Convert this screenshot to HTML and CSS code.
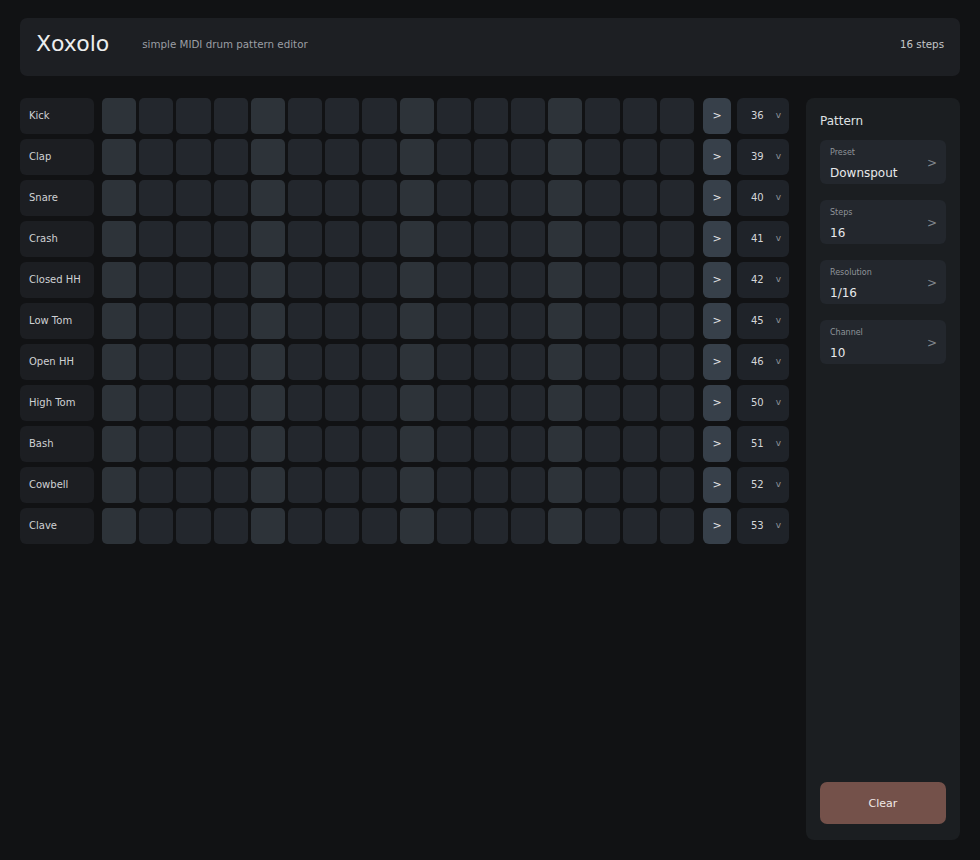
FILE: index.html
```html
<!DOCTYPE html>
<html>
<head>
<meta charset="utf-8">
<title>Xoxolo</title>
<link rel="stylesheet" href="styles.css">
</head>
<body>
<header class="topbar">
  <h1 class="title">Xoxolo</h1>
  <span class="subtitle">simple MIDI drum pattern editor</span>
  <span class="steps-info">16 steps</span>
</header>
<main class="main">
  <section class="grid">
    <div class="row"><div class="label">Kick</div><div class="cells"><i class="c a"></i><i class="c"></i><i class="c"></i><i class="c"></i><i class="c a"></i><i class="c"></i><i class="c"></i><i class="c"></i><i class="c a"></i><i class="c"></i><i class="c"></i><i class="c"></i><i class="c a"></i><i class="c"></i><i class="c"></i><i class="c"></i></div><button class="play">&gt;</button><div class="note"><span>36</span><span class="v">v</span></div></div>
    <div class="row"><div class="label">Clap</div><div class="cells"><i class="c a"></i><i class="c"></i><i class="c"></i><i class="c"></i><i class="c a"></i><i class="c"></i><i class="c"></i><i class="c"></i><i class="c a"></i><i class="c"></i><i class="c"></i><i class="c"></i><i class="c a"></i><i class="c"></i><i class="c"></i><i class="c"></i></div><button class="play">&gt;</button><div class="note"><span>39</span><span class="v">v</span></div></div>
    <div class="row"><div class="label">Snare</div><div class="cells"><i class="c a"></i><i class="c"></i><i class="c"></i><i class="c"></i><i class="c a"></i><i class="c"></i><i class="c"></i><i class="c"></i><i class="c a"></i><i class="c"></i><i class="c"></i><i class="c"></i><i class="c a"></i><i class="c"></i><i class="c"></i><i class="c"></i></div><button class="play">&gt;</button><div class="note"><span>40</span><span class="v">v</span></div></div>
    <div class="row"><div class="label">Crash</div><div class="cells"><i class="c a"></i><i class="c"></i><i class="c"></i><i class="c"></i><i class="c a"></i><i class="c"></i><i class="c"></i><i class="c"></i><i class="c a"></i><i class="c"></i><i class="c"></i><i class="c"></i><i class="c a"></i><i class="c"></i><i class="c"></i><i class="c"></i></div><button class="play">&gt;</button><div class="note"><span>41</span><span class="v">v</span></div></div>
    <div class="row"><div class="label">Closed HH</div><div class="cells"><i class="c a"></i><i class="c"></i><i class="c"></i><i class="c"></i><i class="c a"></i><i class="c"></i><i class="c"></i><i class="c"></i><i class="c a"></i><i class="c"></i><i class="c"></i><i class="c"></i><i class="c a"></i><i class="c"></i><i class="c"></i><i class="c"></i></div><button class="play">&gt;</button><div class="note"><span>42</span><span class="v">v</span></div></div>
    <div class="row"><div class="label">Low Tom</div><div class="cells"><i class="c a"></i><i class="c"></i><i class="c"></i><i class="c"></i><i class="c a"></i><i class="c"></i><i class="c"></i><i class="c"></i><i class="c a"></i><i class="c"></i><i class="c"></i><i class="c"></i><i class="c a"></i><i class="c"></i><i class="c"></i><i class="c"></i></div><button class="play">&gt;</button><div class="note"><span>45</span><span class="v">v</span></div></div>
    <div class="row"><div class="label">Open HH</div><div class="cells"><i class="c a"></i><i class="c"></i><i class="c"></i><i class="c"></i><i class="c a"></i><i class="c"></i><i class="c"></i><i class="c"></i><i class="c a"></i><i class="c"></i><i class="c"></i><i class="c"></i><i class="c a"></i><i class="c"></i><i class="c"></i><i class="c"></i></div><button class="play">&gt;</button><div class="note"><span>46</span><span class="v">v</span></div></div>
    <div class="row"><div class="label">High Tom</div><div class="cells"><i class="c a"></i><i class="c"></i><i class="c"></i><i class="c"></i><i class="c a"></i><i class="c"></i><i class="c"></i><i class="c"></i><i class="c a"></i><i class="c"></i><i class="c"></i><i class="c"></i><i class="c a"></i><i class="c"></i><i class="c"></i><i class="c"></i></div><button class="play">&gt;</button><div class="note"><span>50</span><span class="v">v</span></div></div>
    <div class="row"><div class="label">Bash</div><div class="cells"><i class="c a"></i><i class="c"></i><i class="c"></i><i class="c"></i><i class="c a"></i><i class="c"></i><i class="c"></i><i class="c"></i><i class="c a"></i><i class="c"></i><i class="c"></i><i class="c"></i><i class="c a"></i><i class="c"></i><i class="c"></i><i class="c"></i></div><button class="play">&gt;</button><div class="note"><span>51</span><span class="v">v</span></div></div>
    <div class="row"><div class="label">Cowbell</div><div class="cells"><i class="c a"></i><i class="c"></i><i class="c"></i><i class="c"></i><i class="c a"></i><i class="c"></i><i class="c"></i><i class="c"></i><i class="c a"></i><i class="c"></i><i class="c"></i><i class="c"></i><i class="c a"></i><i class="c"></i><i class="c"></i><i class="c"></i></div><button class="play">&gt;</button><div class="note"><span>52</span><span class="v">v</span></div></div>
    <div class="row"><div class="label">Clave</div><div class="cells"><i class="c a"></i><i class="c"></i><i class="c"></i><i class="c"></i><i class="c a"></i><i class="c"></i><i class="c"></i><i class="c"></i><i class="c a"></i><i class="c"></i><i class="c"></i><i class="c"></i><i class="c a"></i><i class="c"></i><i class="c"></i><i class="c"></i></div><button class="play">&gt;</button><div class="note"><span>53</span><span class="v">v</span></div></div>
  </section>
  <aside class="panel">
    <h2 class="panel-title">Pattern</h2>
    <div class="field"><div class="field-text"><div class="field-label">Preset</div><div class="field-value">Downspout</div></div><span class="chev">&gt;</span></div>
    <div class="field"><div class="field-text"><div class="field-label">Steps</div><div class="field-value">16</div></div><span class="chev">&gt;</span></div>
    <div class="field"><div class="field-text"><div class="field-label">Resolution</div><div class="field-value">1/16</div></div><span class="chev">&gt;</span></div>
    <div class="field"><div class="field-text"><div class="field-label">Channel</div><div class="field-value">10</div></div><span class="chev">&gt;</span></div>
    <button class="clear">Clear</button>
  </aside>
</main>
</body>
</html>
```

FILE: styles.css
```css
* { box-sizing: border-box; }
html, body { margin: 0; height: 100%; }
body {
  background: #111214;
  color: #e6e7e9;
  font-family: "DejaVu Sans", "Noto Sans", sans-serif;
  padding: 18px 20px 20px;
  display: flex;
  flex-direction: column;
  gap: 22px;
}
.topbar {
  height: 58px;
  flex: none;
  background: #1d1f23;
  border-radius: 7px;
  display: flex;
  align-items: center;
  padding: 0 16px 6px;
}
.title {
  margin: 0;
  font-size: 22px;
  font-weight: normal;
  color: #eceded;
  line-height: 26px;
}
.subtitle {
  margin-left: 33px;
  font-size: 10.3px;
  color: #9b9ea3;
}
.steps-info {
  margin-left: auto;
  font-size: 10.3px;
  color: #c4c6c9;
}
.main {
  flex: 1;
  display: flex;
  gap: 17px;
  min-height: 0;
}
.grid {
  width: 769px;
  display: flex;
  flex-direction: column;
  gap: 5px;
}
.row {
  display: flex;
  height: 36px;
}
.label {
  width: 74px;
  background: #1c1e22;
  border-radius: 6px;
  font-size: 10px;
  color: #cfd1d4;
  display: flex;
  align-items: center;
  padding: 0 0 2px 9px;
}
.cells {
  margin-left: 8px;
  flex: 1;
  display: grid;
  grid-template-columns: repeat(16, 1fr);
  gap: 3px;
}
.c {
  display: block;
  background: #23272d;
  border-radius: 5px;
}
.c.a { background: #2d3339; }
.play {
  margin-left: 9px;
  width: 28px;
  border: 0;
  padding: 0 0 2px;
  background: #37404a;
  border-radius: 6px;
  color: #e4e6e8;
  font-family: inherit;
  font-size: 11px;
}
.note {
  margin-left: 6px;
  width: 52px;
  background: #1f2329;
  border-radius: 6px;
  display: flex;
  align-items: center;
  justify-content: flex-end;
  padding: 0 8px 2px 0;
  gap: 12px;
  font-size: 10px;
  color: #d4d6d9;
}
.note .v { font-size: 9px; color: #8d9298; }
.panel {
  width: 154px;
  background: #1b1e21;
  border-radius: 8px;
  padding: 15px 14px 16px;
  display: flex;
  flex-direction: column;
  gap: 16px;
}
.panel-title {
  margin: 0 0 -5px;
  font-size: 12px;
  line-height: 16px;
  font-weight: normal;
  color: #dfe1e3;
}
.field {
  height: 44px;
  background: #23272d;
  border-radius: 6px;
  padding: 8px 10px 3px;
  display: flex;
  align-items: center;
}
.field-text { flex: 1; }
.field-label {
  font-size: 8px;
  line-height: 10px;
  color: #8f9499;
}
.field-value {
  margin-top: 7px;
  font-size: 12px;
  line-height: 16px;
  color: #e8e9eb;
}
.chev {
  font-size: 12px;
  color: #80868c;
  margin-top: -4px;
  margin-right: -1px;
}
.clear {
  margin-top: auto;
  height: 42px;
  border: 0;
  border-radius: 7px;
  background: #74514a;
  color: #f0e9e7;
  font-family: inherit;
  font-size: 11px;
}
```
